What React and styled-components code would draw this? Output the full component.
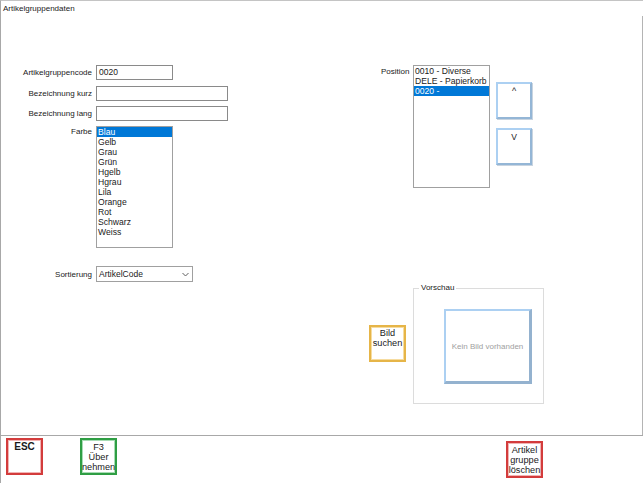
import React from 'react'
import styled, { createGlobalStyle } from 'styled-components'

const GlobalStyle = createGlobalStyle`
  html, body { margin: 0; padding: 0; background: #ffffff; }
  body { font-family: "Liberation Sans", Arial, sans-serif; font-size: 8px; color: #1a1a1a; }
`;

const Window = styled.div`
  width: 643px;
  height: 483px;
  box-sizing: border-box;
  border-top: 1px solid #c4c4c4;
  border-left: 1px solid #a8a8a8;
  display: flex;
  flex-direction: column;
  overflow: hidden;
`;

const Title = styled.div`
  height: 15px;
  padding: 3px 0 0 2px;
  box-sizing: border-box;
  line-height: 9px;
`;

const Body = styled.div`
  height: 419px;
  display: flex;
  border-right: 1px solid #b4b4b4;
`;

const LeftCol = styled.div`
  width: 368px;
  padding-top: 49px;
  display: flex;
  flex-direction: column;
`;

const Field = styled.div`
  display: flex;
  align-items: ${p => (p.$top ? 'flex-start' : 'center')};
  margin-top: ${p => p.$mt || 0}px;
`;

const Label = styled.div`
  width: 91px;
  margin-right: 4px;
  text-align: right;
  padding-top: ${p => p.$pt || 0}px;
  white-space: nowrap;
`;

const TextBox = styled.div`
  width: ${p => p.$w}px;
  height: 15px;
  box-sizing: border-box;
  border: 1px solid #8a8a8a;
  padding: 0 2px;
  line-height: 13px;
  font-size: 8.5px;
`;

const ListBox = styled.div`
  width: ${p => p.$w}px;
  height: ${p => p.$h}px;
  box-sizing: border-box;
  border: 1px solid #a0a0a0;
  display: flex;
  flex-direction: column;
`;

const ListItem = styled.div`
  height: 10px;
  line-height: 10px;
  padding-left: 1px;
  font-size: 8.6px;
  white-space: nowrap;
  background: ${p => (p.$sel ? '#0078d7' : 'transparent')};
  color: ${p => (p.$sel ? '#ffffff' : '#1a1a1a')};
`;

const Combo = styled.div`
  width: 97px;
  height: 16px;
  box-sizing: border-box;
  border: 1px solid #a0a0a0;
  display: flex;
  align-items: center;
  justify-content: space-between;
  padding: 0 3px 0 2px;
  font-size: 8.5px;
`;

const RightCol = styled.div`
  flex: 1;
  padding-top: 49px;
  display: flex;
  flex-direction: column;
`;

const PositionRow = styled.div`
  display: flex;
  align-items: flex-start;
  padding-left: 12px;
`;

const PosLabel = styled.div`
  width: 28px;
  margin-right: 4px;
  padding-top: 2px;
`;

const ArrowColumn = styled.div`
  display: flex;
  flex-direction: column;
  gap: 9px;
  margin: 17px 0 0 6px;
`;

const BlueButton = styled.div`
  width: 36px;
  height: 37px;
  box-sizing: border-box;
  border: 2px solid #acd0f2;
  border-right-color: #94b6d6;
  border-bottom-color: #94b6d6;
  box-shadow: 1px 1px 0 #c8d4e0;
  text-align: center;
  padding-top: 2px;
  font-size: ${p => p.$fs || 8.5}px;
  line-height: 10px;
`;

const PreviewRow = styled.div`
  display: flex;
  align-items: flex-start;
  margin-top: 100px;
`;

const FrameButton = styled.div`
  width: ${p => p.$w || 37}px;
  height: 37px;
  box-sizing: border-box;
  border: 2px solid ${p => p.$color};
  box-shadow: inset 0 0 0 1px ${p => p.$inner};
  text-align: center;
  padding-top: ${p => p.$pt ?? 1}px;
  line-height: 10px;
  font-size: ${p => (p.$bold ? 10 : 9.2)}px;
  font-weight: ${p => (p.$bold ? 700 : 400)};
  margin-top: ${p => p.$mt || 0}px;
  margin-left: ${p => p.$ml || 0}px;
  background: #ffffff;
`;

const GroupBox = styled.div`
  position: relative;
  width: 131px;
  height: 116px;
  box-sizing: border-box;
  border: 1px solid #dcdcdc;
  margin-left: 7px;
  padding: 20px 0 0 30px;
`;

const GroupTitle = styled.span`
  position: absolute;
  top: -6px;
  left: 5px;
  padding: 0 2px;
  background: #ffffff;
  line-height: 10px;
`;

const ImageBox = styled.div`
  width: 88px;
  height: 75px;
  box-sizing: border-box;
  border: 2px solid #acd0f2;
  border-right: 3px solid #94b2cf;
  border-bottom: 3px solid #94b2cf;
  display: flex;
  align-items: center;
  justify-content: center;
  color: #a0a0a0;
  white-space: nowrap;
`;

const BottomBar = styled.div`
  flex: 1;
  border-top: 1px solid #a8a8a8;
  display: flex;
  align-items: flex-start;
  padding-top: 2px;
`;

const Chevron = () => (
  <svg width="7" height="5" viewBox="0 0 7 5">
    <path d="M0.5 1 L3.5 4 L6.5 1" fill="none" stroke="#606060" strokeWidth="1" />
  </svg>
);

const colors = ['Blau', 'Gelb', 'Grau', 'Grün', 'Hgelb', 'Hgrau', 'Lila', 'Orange', 'Rot', 'Schwarz', 'Weiss'];
const positions = ['0010 - Diverse', 'DELE - Papierkorb', '0020 -'];

const App = () => {
  return (
    <>
      <GlobalStyle />
      <Window>
        <Title>Artikelgruppendaten</Title>
        <Body>
          <LeftCol>
            <Field>
              <Label>Artikelgruppencode</Label>
              <TextBox $w={77}>0020</TextBox>
            </Field>
            <Field $mt={6}>
              <Label>Bezeichnung kurz</Label>
              <TextBox $w={132} />
            </Field>
            <Field $mt={5}>
              <Label>Bezeichnung lang</Label>
              <TextBox $w={132} />
            </Field>
            <Field $mt={5} $top>
              <Label $pt={1}>Farbe</Label>
              <ListBox $w={77} $h={122}>
                {colors.map((c, i) => (
                  <ListItem key={c} $sel={i === 0}>{c}</ListItem>
                ))}
              </ListBox>
            </Field>
            <Field $mt={18}>
              <Label>Sortierung</Label>
              <Combo>
                <span>ArtikelCode</span>
                <Chevron />
              </Combo>
            </Field>
          </LeftCol>
          <RightCol>
            <PositionRow>
              <PosLabel>Position</PosLabel>
              <ListBox $w={77} $h={123}>
                {positions.map((p, i) => (
                  <ListItem key={p} $sel={i === 2}>{p}</ListItem>
                ))}
              </ListBox>
              <ArrowColumn>
                <BlueButton $fs={9}>^</BlueButton>
                <BlueButton>V</BlueButton>
              </ArrowColumn>
            </PositionRow>
            <PreviewRow>
              <FrameButton $color="#e6b548" $inner="#f6dca0" $mt={37}>
                Bild<br />suchen
              </FrameButton>
              <GroupBox>
                <GroupTitle>Vorschau</GroupTitle>
                <ImageBox>Kein Bild vorhanden</ImageBox>
              </GroupBox>
            </PreviewRow>
          </RightCol>
        </Body>
        <BottomBar>
          <FrameButton $color="#d33c3c" $inner="#f2b4b4" $ml={5} $bold $pt={2}>ESC</FrameButton>
          <FrameButton $color="#2f9e44" $inner="#a8dcb4" $ml={37} $pt={2}>
            F3<br />Über<br />nehmen
          </FrameButton>
          <FrameButton $color="#d33c3c" $inner="#f2b4b4" $ml={389} $mt={3} $pt={2}>
            Artikel<br />gruppe<br />löschen
          </FrameButton>
        </BottomBar>
      </Window>
    </>
  )
}

export default App
